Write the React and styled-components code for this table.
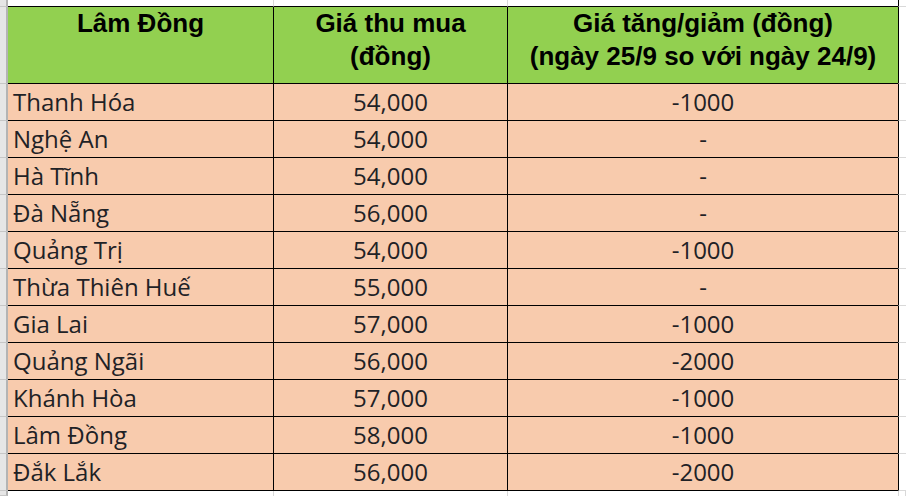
import styled, { createGlobalStyle } from "styled-components";

const rows = [
    { name: "Thanh Hóa", price: "54,000", change: "-1000" },
    { name: "Nghệ An", price: "54,000", change: "-" },
    { name: "Hà Tĩnh", price: "54,000", change: "-" },
    { name: "Đà Nẵng", price: "56,000", change: "-" },
    { name: "Quảng Trị", price: "54,000", change: "-1000" },
    { name: "Thừa Thiên Huế", price: "55,000", change: "-" },
    { name: "Gia Lai", price: "57,000", change: "-1000" },
    { name: "Quảng Ngãi", price: "56,000", change: "-2000" },
    { name: "Khánh Hòa", price: "57,000", change: "-1000" },
    { name: "Lâm Đồng", price: "58,000", change: "-1000" },
    { name: "Đắk Lắk", price: "56,000", change: "-2000" },
]

export default function App() {
    return (
        <>
            <GlobalStyle />
            <Sheet>
                {/* band above the table */}
                <Gutter />
                <TopBand />
                <TopBand />
                <TopBand />
                <Spare />

                {/* header */}
                <Gutter />
                <HeaderCell>Lâm Đồng</HeaderCell>
                <HeaderCell>Giá thu mua<br />(đồng)</HeaderCell>
                <HeaderCell>Giá tăng/giảm (đồng)<br />(ngày 25/9 so với ngày 24/9)</HeaderCell>
                <Spare />

                {rows.map((r) => (
                    <Row key={r.name}>
                        <Gutter />
                        <Cell>{r.name}</Cell>
                        <Cell $center>{r.price}</Cell>
                        <Cell $center>{r.change}</Cell>
                        <Spare />
                    </Row>
                ))}

                {/* band below the table */}
                <Gutter />
                <BottomBand />
                <BottomBand />
                <BottomBand />
                <BottomBand />
            </Sheet>
        </>
    )
}

function Row({ children }) {
    return <>{children}</>
}

const GlobalStyle = createGlobalStyle`
    html, body {
        margin: 0;
        padding: 0;
        background: #FFFFFF;
    }
    * {
        box-sizing: border-box;
    }
`

const Sheet = styled.div`
    width: 100vw;
    height: 100vh;
    overflow: hidden;
    display: grid;
    grid-template-columns: 8px 266px 234px 391px 1fr;
    grid-template-rows: 7px 77px repeat(11, 37px) 1fr;
`

const Gutter = styled.div`
    background-color: #E6E6E6;
    border-right: 2px solid #B4B4B4;
    border-bottom: 1px solid #C6C6C6;
`

const TopBand = styled.div`
    background-color: #FFFFFF;
    border-right: 1px solid #D9D9D9;
    border-bottom: 1px solid #000000;
`

const BottomBand = styled.div`
    background-color: #FFFFFF;
    border-right: 1px solid #D9D9D9;
`

const Spare = styled.div`
    background-color: #FFFFFF;
    border-left: 1px solid #000000;
    border-bottom: 1px solid #D9D9D9;
    margin-left: -1px;
`

const HeaderCell = styled.div`
    background-color: #92D050;
    border-right: 1px solid #000000;
    border-bottom: 1px solid #000000;
    font-family: "Liberation Sans", Arial, sans-serif;
    font-weight: bold;
    font-size: 26px;
    line-height: 33px;
    color: #000000;
    text-align: center;
    white-space: nowrap;
`

const Cell = styled.div`
    background-color: #F8CBAD;
    border-right: 1px solid #000000;
    border-bottom: 1px solid #000000;
    font-family: "Open Sans", "Noto Sans", sans-serif;
    font-size: 24px;
    line-height: 34px;
    color: #1F2226;
    display: flex;
    align-items: flex-end;
    justify-content: ${(p) => (p.$center ? "center" : "flex-start")};
    padding: 0 5px 1px 5px;
    white-space: nowrap;
`
